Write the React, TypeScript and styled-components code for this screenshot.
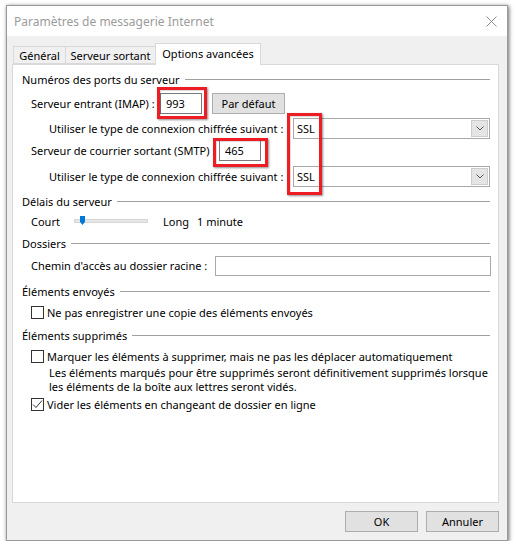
import React from "react";
import styled, { createGlobalStyle } from "styled-components";

const GlobalStyle = createGlobalStyle`
  body {
    margin: 0;
    background: #ffffff;
    font-family: "Noto Sans", "Open Sans", sans-serif;
    font-size: 11px;
    color: #000000;
  }
  * { box-sizing: border-box; }
`;

const Window = styled.div`
  margin: 5px 0 0 6px;
  width: 502px;
  height: 536px;
  border: 1px solid #9a9a9a;
  box-shadow: 1px 1px 4px rgba(0, 0, 0, 0.6);
  background: #f0f0f0;
  display: flex;
  flex-direction: column;
`;

const TitleBar = styled.div`
  height: 30px;
  flex-shrink: 0;
  background: #ffffff;
  display: flex;
  align-items: center;
  justify-content: space-between;
  padding: 0 10px 0 7px;
  font-size: 12px;
  color: #9b9b9b;
`;

const CloseIcon = () => (
  <svg width="11" height="11" viewBox="0 0 11 11">
    <path d="M0.5 0.5 L10.5 10.5 M10.5 0.5 L0.5 10.5" stroke="#8c8c8c" strokeWidth="1" />
  </svg>
);

const Body = styled.div`
  flex: 1;
  display: flex;
  flex-direction: column;
  padding: 7px 8px 0 5px;
`;

const TabStrip = styled.div`
  display: flex;
  align-items: flex-end;
  height: 21px;
  padding-left: 1px;
`;

const Tab = styled.div<{ $active?: boolean; $w: number }>`
  width: ${({ $w }) => $w}px;
  height: ${({ $active }) => ($active ? 22 : 18)}px;
  margin-bottom: ${({ $active }) => ($active ? -1 : 0)}px;
  margin-left: -1px;
  position: relative;
  z-index: ${({ $active }) => ($active ? 2 : 1)};
  border: 1px solid #d9d9d9;
  border-bottom: ${({ $active }) => ($active ? "none" : "1px solid #d9d9d9")};
  background: ${({ $active }) => ($active ? "#ffffff" : "#f0f0f0")};
  display: flex;
  align-items: center;
  justify-content: center;
  padding-bottom: ${({ $active }) => ($active ? 3 : 0)}px;
  white-space: nowrap;
  &:first-child { margin-left: 0; }
`;

const Panel = styled.div`
  position: relative;
  flex: 1;
  background: #ffffff;
  border: 1px solid #d9d9d9;
  padding: 6px 8px 0 9px;
  display: flex;
  flex-direction: column;
`;

const GroupHeader = styled.div<{ $mt?: number }>`
  height: 16px;
  margin-top: ${({ $mt }) => $mt ?? 7}px;
  display: flex;
  align-items: center;
  white-space: nowrap;
  &::after {
    content: "";
    flex: 1;
    height: 1px;
    margin-left: 5px;
    background: #a0a0a0;
  }
`;

const Row = styled.div<{ $h: number; $mt: number; $indent?: number }>`
  height: ${({ $h }) => $h}px;
  margin-top: ${({ $mt }) => $mt}px;
  padding-left: ${({ $indent }) => $indent ?? 9}px;
  display: flex;
  align-items: center;
  white-space: nowrap;
`;

const Label = styled.span<{ $w?: number; $ml?: number }>`
  flex-shrink: 0;
  width: ${({ $w }) => ($w ? `${$w}px` : "auto")};
  margin-left: ${({ $ml }) => $ml ?? 0}px;
`;

const Marked = styled.span<{ $t: number; $r: number; $b: number; $l: number }>`
  position: relative;
  display: inline-flex;
  &::after {
    content: "";
    position: absolute;
    top: -${({ $t }) => $t}px;
    right: -${({ $r }) => $r}px;
    bottom: -${({ $b }) => $b}px;
    left: -${({ $l }) => $l}px;
    border: 3px solid #ee1c24;
    box-shadow: 1px 1px 2px rgba(0, 0, 0, 0.45), inset 1px 1px 1px rgba(0, 0, 0, 0.15);
    pointer-events: none;
  }
`;

const SslMark = styled.div`
  position: absolute;
  left: 274px;
  top: 48px;
  width: 35px;
  height: 82px;
  border: 3px solid #ee1c24;
  box-shadow: 1px 1px 2px rgba(0, 0, 0, 0.45), inset 1px 1px 1px rgba(0, 0, 0, 0.15);
  pointer-events: none;
`;

const NumField = styled.input`
  width: 42px;
  height: 21px;
  border: 1px solid #7a7a7a;
  padding: 0 0 0 5px;
  font: inherit;
  color: #000;
  background: #fff;
  outline: none;
`;

const Button = styled.button<{ $ml?: number }>`
  width: 73px;
  height: 21px;
  margin-left: ${({ $ml }) => $ml ?? 0}px;
  border: 1px solid #adadad;
  background: #e1e1e1;
  font: inherit;
  color: #000;
  padding: 0;
  display: flex;
  align-items: center;
  justify-content: center;
`;

const Select = styled.div`
  margin-left: auto;
  width: 197px;
  height: 21px;
  border: 1px solid #a9a9a9;
  background: #fff;
  display: flex;
  align-items: center;
  justify-content: space-between;
  padding: 0 1px 0 3px;
`;

const ArrowBox = styled.span`
  width: 17px;
  height: 17px;
  background: #e5e5e5;
  border: 1px solid #cccccc;
  display: flex;
  align-items: center;
  justify-content: center;
`;

const Chevron = () => (
  <svg width="8" height="5" viewBox="0 0 8 5">
    <path d="M0.5 0.5 L4 4 L7.5 0.5" fill="none" stroke="#555" strokeWidth="1" />
  </svg>
);

const Track = styled.span`
  position: relative;
  width: 74px;
  height: 4px;
  background: #e7e7e7;
  border: 1px solid #d6d6d6;
`;

const Thumb = styled.span`
  position: absolute;
  left: 5px;
  top: -4px;
  width: 5px;
  height: 9px;
  background: #0078d7;
  clip-path: polygon(0 0, 100% 0, 100% 65%, 50% 100%, 0 65%);
`;

const TextField = styled.input`
  flex: 1;
  height: 20px;
  margin-right: -1px;
  border: 1px solid #a9a9a9;
  background: #fff;
  outline: none;
  font: inherit;
`;

const Box = styled.span`
  width: 13px;
  height: 13px;
  flex-shrink: 0;
  border: 1px solid #333333;
  background: #fff;
  margin-right: 3px;
  display: flex;
  align-items: center;
  justify-content: center;
`;

const Check = ({ on }: { on?: boolean }) => (
  <Box>
    {on && (
      <svg width="11" height="11" viewBox="0 0 11 11">
        <path d="M1 5.5 L4 8.5 L10 1.5" fill="none" stroke="#333" strokeWidth="1" />
      </svg>
    )}
  </Box>
);

const Note = styled.div`
  margin-top: 2px;
  padding-left: 27px;
  line-height: 14px;
  height: 28px;
`;

const Footer = styled.div`
  display: flex;
  justify-content: flex-end;
  gap: 8px;
  padding: 8px 0 8px 0;
`;

const App = () => (
  <>
    <GlobalStyle />
    <Window>
      <TitleBar>
        <span>Paramètres de messagerie Internet</span>
        <CloseIcon />
      </TitleBar>
      <Body>
        <TabStrip>
          <Tab $w={53}>Général</Tab>
          <Tab $w={91}>Serveur sortant</Tab>
          <Tab $active $w={106}>Options avancées</Tab>
        </TabStrip>
        <Panel>
          <GroupHeader $mt={0}>Numéros des ports du serveur</GroupHeader>
          <Row $h={22} $mt={5}>
            <Label $w={129}>Serveur entrant (IMAP) :</Label>
            <Marked $t={6} $r={5} $b={5} $l={3}>
              <NumField readOnly value="993" />
            </Marked>
            <Button $ml={10}>Par défaut</Button>
          </Row>
          <Row $h={21} $mt={4} $indent={27}>
            <Label>Utiliser le type de connexion chiffrée suivant :</Label>
            <Select>
              SSL
              <ArrowBox><Chevron /></ArrowBox>
            </Select>
          </Row>
          <Row $h={23} $mt={0}>
            <Label $w={188}>Serveur de courrier sortant (SMTP) :</Label>
            <Marked $t={2} $r={7} $b={6} $l={6}>
              <NumField readOnly value="465" />
            </Marked>
          </Row>
          <Row $h={20} $mt={4} $indent={27}>
            <Label>Utiliser le type de connexion chiffrée suivant :</Label>
            <Select>
              SSL
              <ArrowBox><Chevron /></ArrowBox>
            </Select>
          </Row>
          <SslMark />

          <GroupHeader>Délais du serveur</GroupHeader>
          <Row $h={16} $mt={4}>
            <Label $w={43}>Court</Label>
            <Track><Thumb /></Track>
            <Label $w={34} $ml={15}>Long</Label>
            <Label>1 minute</Label>
          </Row>

          <GroupHeader $mt={6}>Dossiers</GroupHeader>
          <Row $h={21} $mt={4}>
            <Label $w={184}>Chemin d'accès au dossier racine :</Label>
            <TextField readOnly value="" />
          </Row>

          <GroupHeader>Éléments envoyés</GroupHeader>
          <Row $h={16} $mt={5}>
            <Check />
            <Label>Ne pas enregistrer une copie des éléments envoyés</Label>
          </Row>

          <GroupHeader>Éléments supprimés</GroupHeader>
          <Row $h={16} $mt={5}>
            <Check />
            <Label>Marquer les éléments à supprimer, mais ne pas les déplacer automatiquement</Label>
          </Row>
          <Note>
            Les éléments marqués pour être supprimés seront définitivement supprimés lorsque
            <br />
            les éléments de la boîte aux lettres seront vidés.
          </Note>
          <Row $h={16} $mt={2}>
            <Check on />
            <Label>Vider les éléments en changeant de dossier en ligne</Label>
          </Row>
        </Panel>
        <Footer>
          <Button>OK</Button>
          <Button>Annuler</Button>
        </Footer>
      </Body>
    </Window>
  </>
);

export default App;
